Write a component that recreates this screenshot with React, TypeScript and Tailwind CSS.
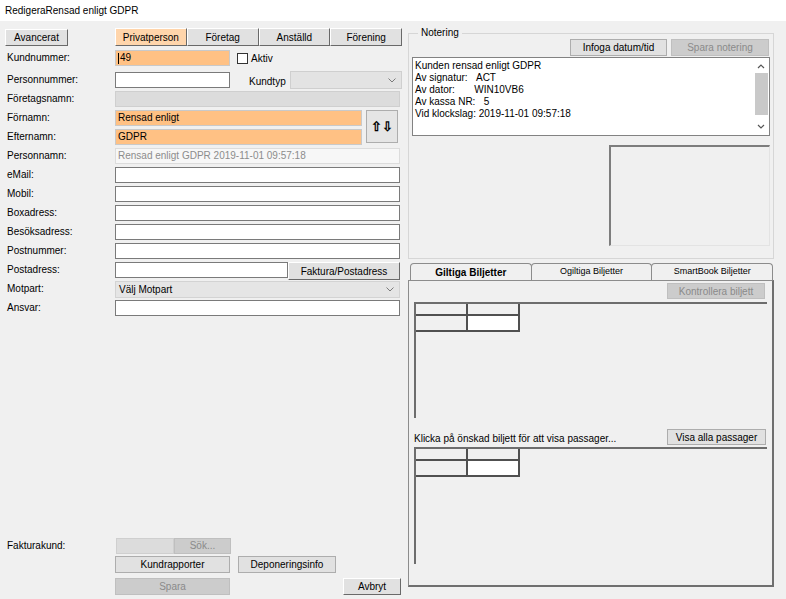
import type { ReactNode } from "react";

/*
  "Redigera kund" dialog — WinForms style, left form column + right
  notes / biljetter column.
*/

const BTN = "flex items-center justify-center border bg-[#e1e1e1] text-[10px] text-black";
const BTN_3D = `${BTN} border-t-white border-l-white border-r-[#696969] border-b-[#696969]`;
const BTN_FLAT = `${BTN} border-[#adadad]`;
const BTN_OFF = "flex items-center justify-center border border-[#bfbfbf] bg-[#cccccc] text-[10px] text-[#8a8a8a]";
const INPUT = "h-[16px] border border-[#7a7a7a] bg-white px-[2px] text-[10px] leading-[14px]";
const ORANGE = "h-[16px] border border-[#c9c9c9] bg-[#ffc184] px-[2px] text-[10px] leading-[14px]";

function Row({ label, h = 19, children }: { label: string; h?: number; children?: ReactNode }) {
  return (
    <div className="flex items-start" style={{ height: h }}>
      <div className="w-[108px] pl-[0px] pt-[2px] text-[10px] leading-[14px]">{label}</div>
      <div className="mt-[1px] flex flex-1 items-start">{children}</div>
    </div>
  );
}

function Chevron() {
  return (
    <svg width="8" height="5" viewBox="0 0 8 5" className="flex-none">
      <path d="M0.5 0.5 L4 4 L7.5 0.5" fill="none" stroke="#7a7a7a" strokeWidth="1" />
    </svg>
  );
}

function MiniGrid() {
  return (
    <div className="flex h-full flex-col border-l-2 border-t-2 border-[#6d6d6d] bg-[#f0f0f0]">
      <div className="grid w-[104px] grid-cols-[52px_50px] grid-rows-[12px_14px] border-b-2 border-r-2 border-[#505050]">
        <div className="border-b-2 border-r-2 border-[#505050]" />
        <div className="border-b-2 border-[#505050]" />
        <div className="border-r-2 border-[#505050]" />
        <div className="bg-white" />
      </div>
    </div>
  );
}

const TABS = ["Privatperson", "Företag", "Anställd", "Förening"];
const BILJETT_TABS = ["Giltiga Biljetter", "Ogiltiga Biljetter", "SmartBook Biljetter"];

export default function App() {
  return (
    <div
      className="flex h-[599px] w-[786px] flex-col bg-white text-black"
      style={{ fontFamily: "'Liberation Sans', Arial, sans-serif" }}
    >
      {/* Title */}
      <div className="flex h-[21px] items-center pl-[5px] text-[10px]">RedigeraRensad enligt GDPR</div>

      <div className="flex flex-1 bg-[#f0f0f0]">
        {/* Left: customer form */}
        <div className="flex w-[402px] flex-col pl-[5px] pt-[7px] pb-[4px]">
          <div className="flex h-[18px]">
            <button className={`${BTN_3D} mt-[1px] h-[17px] w-[63px]`}>Avancerat</button>
            <div className="ml-[47px] flex flex-1">
              {TABS.map((t, i) => (
                <button
                  key={t}
                  className={`${BTN_3D} h-[18px] flex-1 ${i === 0 ? "bg-[#ffd5ab]" : ""}`}
                >
                  {t}
                </button>
              ))}
            </div>
          </div>

          <div className="mt-[3px] flex flex-col pl-[2px]">
            <Row label="Kundnummer:" h={22}>
              <div className={`${ORANGE} flex w-[115px] items-center border-[#4f8ed8]`}>
                <span className="mr-[1px] h-[11px] w-px bg-black" />
                49
              </div>
              <div className="ml-[7px] flex items-center gap-[3px] pt-[1px] text-[10px]">
                <span className="h-[11px] w-[11px] border border-[#333] bg-white" />
                Aktiv
              </div>
            </Row>
            <Row label="Personnummer:">
              <div className={`${INPUT} w-[115px]`} />
              <div className="ml-[19px] pt-[2px] text-[10px]">Kundtyp</div>
              <div className="-mt-[1px] ml-[4px] flex h-[18px] flex-1 items-center justify-end border border-[#cfcfcf] bg-[#e3e3e3] pr-[5px]">
                <Chevron />
              </div>
            </Row>
            <Row label="Företagsnamn:">
              <div className="h-[16px] w-[285px] border border-[#cfcfcf] bg-[#dcdcdc]" />
            </Row>
            <div className="flex">
              <div className="flex flex-col">
                <Row label="Förnamn:">
                  <div className={`${ORANGE} w-[247px]`}>Rensad enligt</div>
                </Row>
                <Row label="Efternamn:">
                  <div className={`${ORANGE} w-[247px]`}>GDPR</div>
                </Row>
              </div>
              <button className={`${BTN_FLAT} ml-[4px] mt-[1px] h-[33px] w-[32px] bg-[#e5e5e5] text-[13px] font-bold`}>
                ⇧⇩
              </button>
            </div>
            <Row label="Personnamn:">
              <div className="h-[16px] w-[285px] border border-[#dcdcdc] bg-[#f7f7f7] px-[2px] text-[10px] leading-[14px] text-[#8c8c8c]">
                Rensad enligt GDPR 2019-11-01 09:57:18
              </div>
            </Row>
            {["eMail:", "Mobil:", "Boxadress:", "Besöksadress:", "Postnummer:"].map((l) => (
              <Row key={l} label={l}>
                <div className={`${INPUT} w-[285px]`} />
              </Row>
            ))}
            <Row label="Postadress:">
              <div className={`${INPUT} w-[173px]`} />
              <button className={`${BTN_3D} h-[18px] w-[112px] text-[9px]`}>Faktura/Postadress</button>
            </Row>
            <Row label="Motpart:">
              <div className="flex h-[17px] w-[285px] items-center justify-between border border-[#d3d3d3] bg-[#e5e5e5] pl-[3px] pr-[5px] text-[10px]">
                Välj Motpart
                <Chevron />
              </div>
            </Row>
            <Row label="Ansvar:">
              <div className={`${INPUT} w-[285px]`} />
            </Row>
          </div>

          {/* Bottom actions */}
          <div className="mt-auto flex flex-col pl-[2px]">
            <div className="flex h-[19px] items-center">
              <div className="w-[109px] text-[10px]">Fakturakund:</div>
              <div className="h-[16px] w-[58px] border border-[#cfcfcf] bg-[#dcdcdc]" />
              <button className={`${BTN_OFF} h-[16px] w-[57px]`}>Sök...</button>
            </div>
            <div className="mt-[1px] flex h-[18px] pl-[108px]">
              <button className={`${BTN_FLAT} h-[17px] w-[115px]`}>Kundrapporter</button>
              <button className={`${BTN_FLAT} ml-[8px] h-[17px] w-[98px]`}>Deponeringsinfo</button>
            </div>
            <div className="mt-[4px] flex h-[17px] pl-[108px]">
              <button className={`${BTN_OFF} h-[17px] w-[115px]`}>Spara</button>
              <button className={`${BTN_3D} ml-auto mr-[1px] h-[17px] w-[58px]`}>Avbryt</button>
            </div>
          </div>
        </div>

        {/* Right: notes + tickets */}
        <div className="ml-[6px] flex w-[366px] flex-col pt-[5px]">
          <fieldset className="h-[233px] border border-[#d6d6d6] px-[3px] pb-[9px]">
            <legend className="ml-[6px] px-[3px] text-[10px] leading-[14px]">Notering</legend>
            <div className="-mt-[1px] flex justify-end gap-[4px] pr-[1px]">
              <button className={`${BTN_FLAT} h-[17px] w-[97px]`}>Infoga datum/tid</button>
              <button className={`${BTN_OFF} h-[17px] w-[98px]`}>Spara notering</button>
            </div>
            <div className="mt-[1px] flex h-[79px] border border-[#828282] bg-white">
              <div className="flex-1 pl-[2px] pt-[2px] text-[10px] leading-[12px]">
                <div>Kunden rensad enligt GDPR</div>
                <div>Av signatur:&nbsp;&nbsp;&nbsp;ACT</div>
                <div>Av dator:&nbsp;&nbsp;&nbsp;&nbsp;&nbsp;&nbsp;&nbsp;WIN10VB6</div>
                <div>Av kassa NR:&nbsp;&nbsp;&nbsp;5</div>
                <div>Vid klockslag: 2019-11-01 09:57:18</div>
              </div>
              <div className="flex w-[16px] flex-col items-center">
                <svg width="8" height="14" viewBox="0 0 8 14" className="mt-[1px]">
                  <path d="M1 9 L4 6 L7 9" fill="none" stroke="#555" strokeWidth="1.2" />
                </svg>
                <div className="h-[42px] w-[13px] bg-[#c9c9c9]" />
                <div className="flex-1" />
                <svg width="8" height="14" viewBox="0 0 8 14" className="mb-[1px]">
                  <path d="M1 5 L4 8 L7 5" fill="none" stroke="#555" strokeWidth="1.2" />
                </svg>
              </div>
            </div>
            <div className="mt-[9px] flex justify-end">
              <div className="h-[101px] w-[161px] border-b border-l-2 border-r border-t-2 border-[#7d7d7d] border-b-[#e3e3e3] border-r-[#e3e3e3]" />
            </div>
          </fieldset>

          {/* Biljetter tab control */}
          <div className="mt-[4px] flex pl-[2px] pr-[1px]">
            {BILJETT_TABS.map((t, i) => (
              <div
                key={t}
                className={`flex h-[17px] flex-1 items-center justify-center rounded-t-[4px] border border-b-0 border-[#8c8c8c] bg-[#f0f0f0] ${
                  i === 0 ? "text-[10px] font-bold" : "-ml-px text-[9px]"
                }`}
              >
                {t}
              </div>
            ))}
          </div>
          <div className="flex h-[307px] flex-col border border-b-2 border-r-2 border-[#8c8c8c] border-b-[#6f6f6f] border-r-[#6f6f6f] px-[5px] pb-[21px] pt-[2px]">
            <div className="flex justify-end pr-[2px]">
              <button className={`${BTN_OFF} h-[16px] w-[98px]`}>Kontrollera biljett</button>
            </div>
            <div className="mt-[3px] h-[116px]">
              <MiniGrid />
            </div>
            <div className="mt-[11px] flex items-end justify-between pr-[1px]">
              <div className="text-[10px] leading-[13px]">Klicka på önskad biljett för att visa passager...</div>
              <button className={`${BTN_FLAT} h-[16px] w-[99px]`}>Visa alla passager</button>
            </div>
            <div className="mt-[2px] flex-1">
              <MiniGrid />
            </div>
          </div>
        </div>
      </div>
    </div>
  );
}
